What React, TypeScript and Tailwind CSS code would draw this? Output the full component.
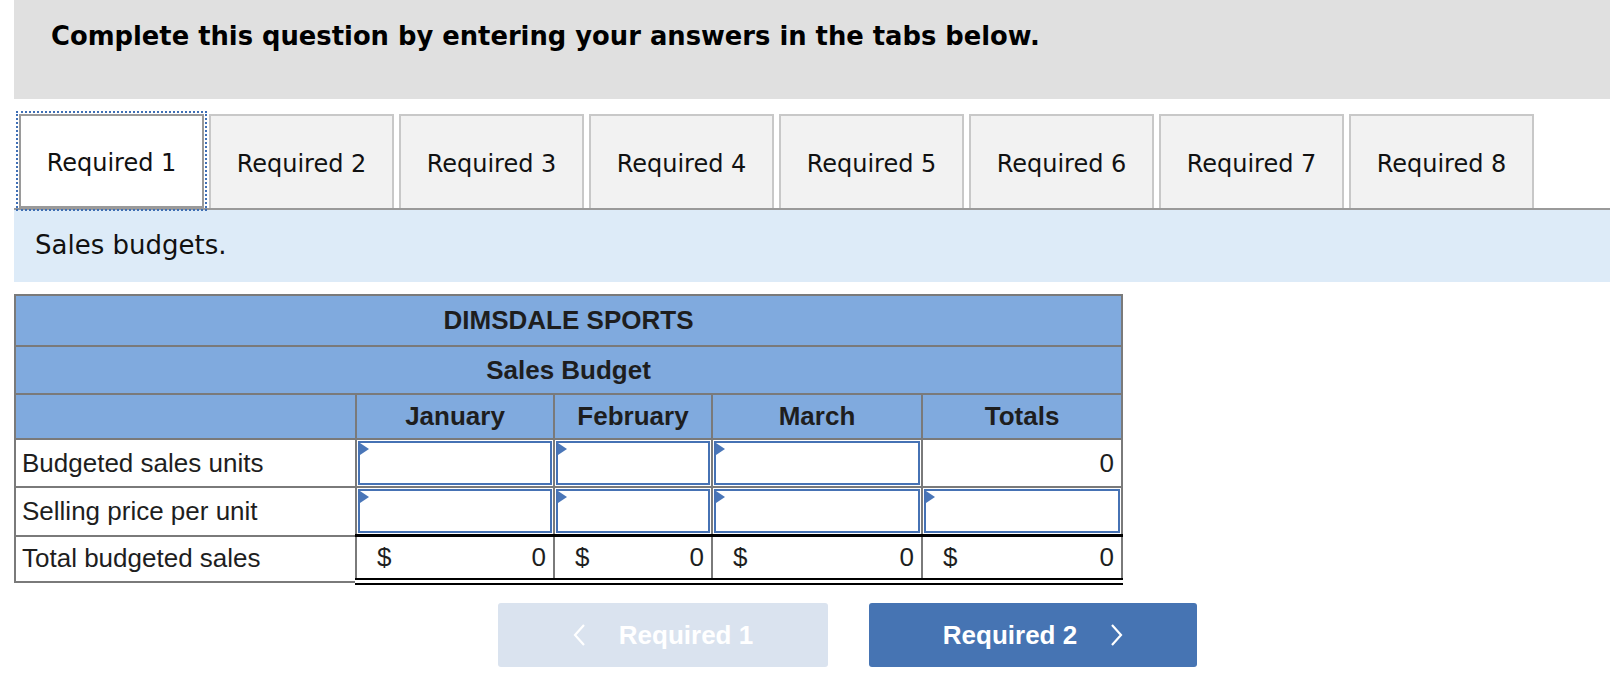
const tabs = ["Required 1", "Required 2", "Required 3", "Required 4", "Required 5", "Required 6", "Required 7", "Required 8"];

const Flag = () => (
    <svg className="absolute left-0 top-0" width="9" height="12" viewBox="0 0 9 12">
        <polygon points="0,0 9,6 0,12" fill="#4a76b8" />
    </svg>
);

const InputCell = () => (
    <td className="border-2 border-[#7a7a7a] p-[1px]">
        <div className="relative h-[44px] border-2 border-[#4672b4] bg-white">
            <Flag />
        </div>
    </td>
);

const Chevron = ({ dir }: { dir: "left" | "right" }) => (
    <svg width="13" height="22" viewBox="0 0 13 22" fill="none" stroke="currentColor" strokeWidth="2.2">
        {dir === "left" ? <polyline points="11,1 2,11 11,21" /> : <polyline points="2,1 11,11 2,21" />}
    </svg>
);

export default function App() {
    const arial = { fontFamily: '"Liberation Sans", Arial, sans-serif' };
    return (
        <div className="h-[684px] w-full overflow-hidden bg-white text-[#111]" style={{ fontFamily: '"DejaVu Sans", Verdana, sans-serif' }}>
            <div className="ml-[14px] h-[99px] bg-[#e0e0e0] pl-[37px] pt-[21px]">
                <h1 className="text-[25.8px] font-bold leading-[30px] text-black">
                    Complete this question by entering your answers in the tabs below.
                </h1>
            </div>

            <div className="ml-[14px] flex gap-[5px] border-b-2 border-[#9a9a9a] pl-[5px] pt-[15px]">
                {tabs.map((t, i) => (
                    <div
                        key={t}
                        className={
                            i === 0
                                ? "flex h-[94px] w-[185px] items-center justify-center border-2 border-[#9a9a9a] bg-white pt-[3px] text-[24px] outline-2 outline-offset-[1px] outline-[#3f6fb5] outline-dotted"
                                : "flex h-[94px] w-[185px] items-center justify-center border-2 border-b-0 border-[#c8c8c8] bg-[#f2f2f2] pt-[3px] text-[24px]"
                        }
                    >
                        {t}
                    </div>
                ))}
            </div>

            <div className="ml-[14px] flex h-[72px] items-center bg-[#ddebf8] pl-[21px] pb-[2px] text-[26px]">
                Sales budgets.
            </div>

            <div className="ml-[14px] mt-[12px]" style={arial}>
                <table className="w-[1107px] table-fixed border-collapse text-[26px] text-[#1e1e1e]">
                    <colgroup>
                        <col className="w-[341px]" />
                        <col className="w-[198px]" />
                        <col className="w-[158px]" />
                        <col className="w-[210px]" />
                        <col className="w-[200px]" />
                    </colgroup>
                    <thead>
                        <tr className="h-[51px]">
                            <th colSpan={5} className="border-2 border-[#7a7a7a] bg-[#80aade] text-center font-bold">
                                DIMSDALE SPORTS
                            </th>
                        </tr>
                        <tr className="h-[48px]">
                            <th colSpan={5} className="border-2 border-[#7a7a7a] bg-[#80aade] text-center font-bold">
                                Sales Budget
                            </th>
                        </tr>
                        <tr className="h-[45px]">
                            <th className="border-2 border-[#7a7a7a] bg-[#80aade]"></th>
                            <th className="border-2 border-[#7a7a7a] bg-[#80aade] font-bold">January</th>
                            <th className="border-2 border-[#7a7a7a] bg-[#80aade] font-bold">February</th>
                            <th className="border-2 border-[#7a7a7a] bg-[#80aade] font-bold">March</th>
                            <th className="border-2 border-[#7a7a7a] bg-[#80aade] font-bold">Totals</th>
                        </tr>
                    </thead>
                    <tbody>
                        <tr className="h-[48px]">
                            <td className="border-2 border-[#7a7a7a] pl-[6px] font-normal">Budgeted sales units</td>
                            <InputCell />
                            <InputCell />
                            <InputCell />
                            <td className="border-2 border-[#7a7a7a] pr-[7px] text-right">0</td>
                        </tr>
                        <tr className="h-[47px]">
                            <td className="border-2 border-[#7a7a7a] pl-[6px]">Selling price per unit</td>
                            <InputCell />
                            <InputCell />
                            <InputCell />
                            <InputCell />
                        </tr>
                        <tr className="h-[46px]">
                            <td className="border-2 border-[#7a7a7a] pl-[6px]">Total budgeted sales</td>
                            {[0, 1, 2, 3].map((k) => (
                                <td
                                    key={k}
                                    className="border-x-2 border-t-[3px] border-b-[7px] border-solid border-x-[#7a7a7a] border-t-black border-b-black [border-bottom-style:double]"
                                >
                                    <div className="flex items-center justify-between pl-[20px] pr-[7px]">
                                        <span>$</span>
                                        <span>0</span>
                                    </div>
                                </td>
                            ))}
                        </tr>
                    </tbody>
                </table>
            </div>

            <div className="mt-[18px] flex gap-[41px] pl-[498px]" style={arial}>
                <button className="flex h-[64px] w-[330px] items-center justify-center gap-[33px] rounded-[3px] bg-[#dae3ef] text-[26px] font-bold text-white">
                    <Chevron dir="left" />
                    <span>Required 1</span>
                </button>
                <button className="flex h-[64px] w-[328px] items-center justify-center gap-[33px] rounded-[3px] bg-[#4674b3] text-[26px] font-bold text-white">
                    <span>Required 2</span>
                    <Chevron dir="right" />
                </button>
            </div>
        </div>
    );
}
